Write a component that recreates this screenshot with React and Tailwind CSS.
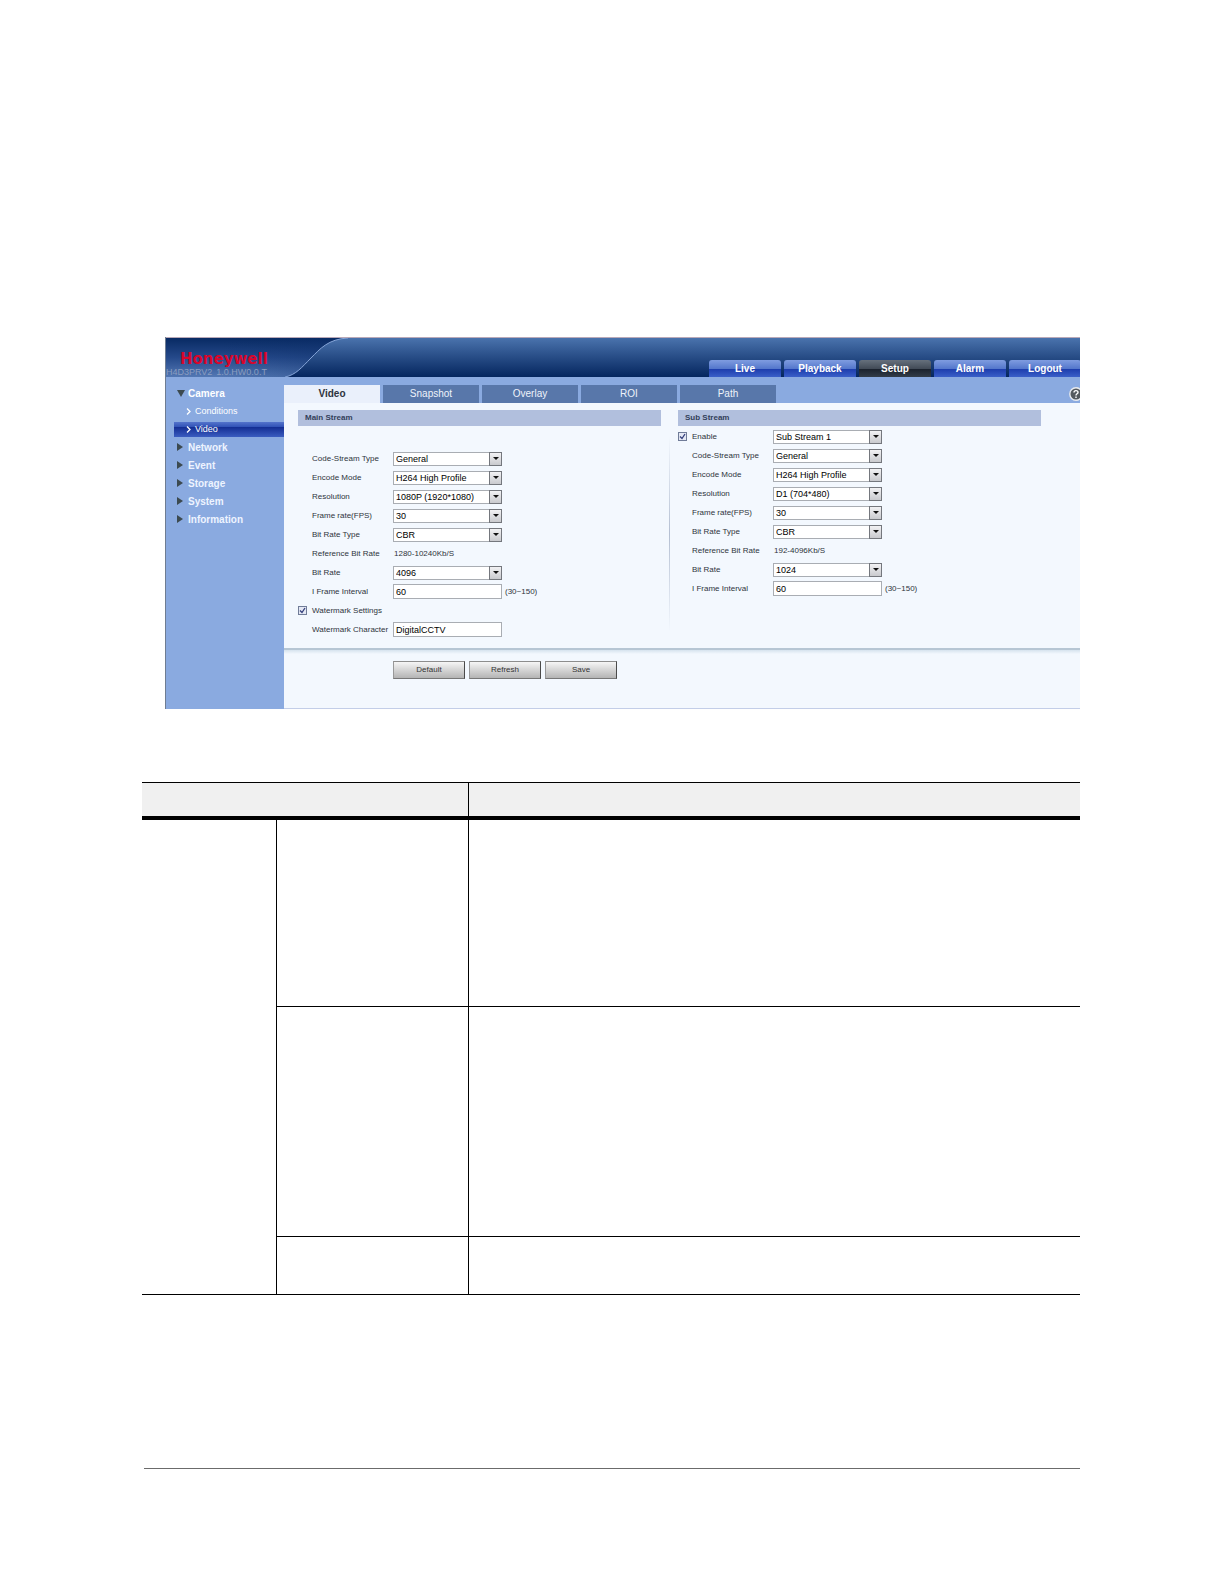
import { useState } from 'react';

const NAV = ['Live', 'Playback', 'Setup', 'Alarm', 'Logout'];
const TABS = ['Video', 'Snapshot', 'Overlay', 'ROI', 'Path'];
const SECTIONS = ['Network', 'Event', 'Storage', 'System', 'Information'];

function Header() {
  return (
    <header className="flex h-10 items-end justify-between overflow-hidden border-t border-[#b9a9b8] bg-linear-to-b from-[#4a73ad] to-[#05265f]">
      <div className="relative h-full w-[182px]">
        <svg className="absolute inset-0 h-full w-full" viewBox="0 0 182 39" preserveAspectRatio="none" aria-hidden="true">
          <defs>
            <linearGradient id="brand" x1="0" y1="0" x2="0" y2="1">
              <stop offset="0" stopColor="#082a63" />
              <stop offset="0.5" stopColor="#25498a" />
              <stop offset="1" stopColor="#5378b4" />
            </linearGradient>
            <linearGradient id="shade" x1="0" y1="0" x2="1" y2="0">
              <stop offset="0.3" stopColor="#0b2d66" stopOpacity="0" />
              <stop offset="1" stopColor="#0b2d66" stopOpacity="0.4" />
            </linearGradient>
          </defs>
          <path d="M0 0H182C162 1 154 11 145 20C136 29 130 37 119 39H0Z" fill="url(#brand)" />
          <path d="M0 0H182C162 1 154 11 145 20C136 29 130 37 119 39H0Z" fill="url(#shade)" />
          <path d="M182 0C162 1 154 11 145 20C136 29 130 37 119 39" fill="none" stroke="#86a5d8" />
        </svg>
        <div className="relative flex h-full flex-col justify-end">
          <span className="pl-[14px] font-['DejaVu_Sans',sans-serif] text-[15px] leading-[16px] font-bold text-[#d8062c]">
            Honeywell
          </span>
          <span className="flex gap-1 text-[9px] leading-[10px] text-[#8b9dbf]">
            <span>H4D3PRV2</span>
            <span>1.0.HW0.0.T</span>
          </span>
        </div>
      </div>
      <nav className="-mr-px flex gap-[3px]">
        {NAV.map((item) => (
          <a
            key={item}
            href="#"
            className={`h-[17px] w-[72px] rounded-t-[3px] text-center text-[10px] leading-[17px] font-bold text-white ${
              item === 'Setup'
                ? 'bg-[linear-gradient(#66707c,#434c58_50%,#1a212c_52%,#323c48)]'
                : 'bg-[linear-gradient(#7f9ce0,#5578cc_50%,#1c3cac_52%,#3a5fc8)]'
            }`}
          >
            {item}
          </a>
        ))}
      </nav>
    </header>
  );
}

function Sidebar() {
  return (
    <aside className="w-[118px] shrink-0 bg-[#8aaae0] pt-[7px] pl-2">
      <a href="#" className="flex h-[18px] items-center gap-[3px] pl-[3px] text-[10px] font-bold text-white">
        <svg className="h-[7px] w-[8px]" viewBox="0 0 8 7" aria-hidden="true">
          <path d="M0 0H8L4 7Z" fill="#3c4a50" />
        </svg>
        Camera
      </a>
      {['Conditions', 'Video'].map((item) => (
        <a key={item} href="#" className="flex h-[18px] items-center">
          <span
            className={`flex h-[15px] flex-1 items-center gap-1 pl-3 text-[9px] leading-[15px] text-white ${
              item === 'Video' ? 'bg-[linear-gradient(#5474cc,#3455b8_30%,#152f94_36%,#3a5cc0)]' : ''
            }`}
          >
            <svg className="h-[7px] w-[5px]" viewBox="0 0 5 7" aria-hidden="true">
              <path d="M1 0.5L4 3.5L1 6.5" fill="none" stroke="#fff" strokeWidth="1.3" />
            </svg>
            {item}
          </span>
        </a>
      ))}
      {SECTIONS.map((item) => (
        <a key={item} href="#" className="flex h-[18px] items-center gap-[5px] pl-[3px] text-[10px] font-bold text-[#eef4ff]">
          <svg className="h-[8px] w-[6px]" viewBox="0 0 6 8" aria-hidden="true">
            <path d="M0 0L6 4L0 8Z" fill="#3c4a50" />
          </svg>
          {item}
        </a>
      ))}
    </aside>
  );
}

function Check({ id }) {
  const [checked, setChecked] = useState(true);
  return (
    <span className="grid h-[9px] w-[9px] shrink-0">
      <input
        id={id}
        type="checkbox"
        checked={checked}
        onChange={() => setChecked(!checked)}
        className="col-start-1 row-start-1 h-[9px] w-[9px] appearance-none border border-[#707c98] bg-[#e4e8f4]"
      />
      {checked && (
        <svg className="pointer-events-none col-start-1 row-start-1 h-[9px] w-[9px]" viewBox="0 0 9 9" aria-hidden="true">
          <path d="M2 4.5L4 6.5L7 2" fill="none" stroke="#35407c" strokeWidth="1.3" />
        </svg>
      )}
    </span>
  );
}

function Select({ id, value, label }) {
  return (
    <span className="relative flex w-[109px]">
      <select
        id={id}
        aria-label={label}
        className="h-[14px] w-full appearance-none border border-[#a9adb3] bg-white pl-[2px] text-[9px] leading-[12px] text-black"
      >
        <option>{value}</option>
      </select>
      <span className="pointer-events-none absolute inset-y-0 right-0 flex w-[13px] items-center justify-center border border-[#74777d] bg-linear-to-b from-[#f2f2f4] to-[#c9cace]">
        <svg className="h-[3px] w-[6px]" viewBox="0 0 6 3" aria-hidden="true">
          <path d="M0 0H6L3 3Z" fill="#111" />
        </svg>
      </span>
    </span>
  );
}

function Row({ id, label, type, value, hint }) {
  return (
    <div className="flex h-[19px] items-center">
      <span className="flex w-[14px] shrink-0">{type === 'check' || type === 'checkSelect' ? <Check id={id} /> : null}</span>
      <label htmlFor={id} className="w-[81px] shrink-0 whitespace-nowrap">
        {label}
      </label>
      {type === 'select' && <Select id={id} value={value} />}
      {type === 'checkSelect' && <Select id={`${id}-stream`} label="Sub stream" value={value} />}
      {type === 'input' && (
        <input
          id={id}
          type="text"
          defaultValue={value}
          className="h-[15px] w-[109px] border border-[#a9adb3] bg-white pl-[2px] text-[9px] leading-[13px] text-black"
        />
      )}
      {type === 'text' && <output id={id} className="pl-px">{value}</output>}
      {hint && <span className="pl-[3px]">{hint}</span>}
    </div>
  );
}

const mainRows = [
  ['Code-Stream Type', 'select', 'General'],
  ['Encode Mode', 'select', 'H264 High Profile'],
  ['Resolution', 'select', '1080P (1920*1080)'],
  ['Frame rate(FPS)', 'select', '30'],
  ['Bit Rate Type', 'select', 'CBR'],
  ['Reference Bit Rate', 'text', '1280-10240Kb/S'],
  ['Bit Rate', 'select', '4096'],
  ['I Frame Interval', 'input', '60', '(30~150)'],
  ['Watermark Settings', 'check'],
  ['Watermark Character', 'input', 'DigitalCCTV'],
];

const subRows = [
  ['Enable', 'checkSelect', 'Sub Stream 1'],
  ['Code-Stream Type', 'select', 'General'],
  ['Encode Mode', 'select', 'H264 High Profile'],
  ['Resolution', 'select', 'D1 (704*480)'],
  ['Frame rate(FPS)', 'select', '30'],
  ['Bit Rate Type', 'select', 'CBR'],
  ['Reference Bit Rate', 'text', '192-4096Kb/S'],
  ['Bit Rate', 'select', '1024'],
  ['I Frame Interval', 'input', '60', '(30~150)'],
];

function Stream({ title, name, rows, className }) {
  return (
    <section className="min-w-0 flex-1">
      <h2 className="h-4 bg-[#b1bfdd] pl-[7px] leading-4 font-bold text-[#33405a]">{title}</h2>
      <div className={className}>
        {rows.map(([label, type, value, hint], i) => (
          <Row key={label} id={`${name}-${i}`} label={label} type={type} value={value} hint={hint} />
        ))}
      </div>
    </section>
  );
}

function CameraSetup() {
  return (
    <div className="overflow-hidden border-l border-[#6f7d92] font-['Liberation_Sans',sans-serif] text-[8px] text-[#2e343c]">
      <Header />
      <div className="flex">
        <Sidebar />
        <main className="min-w-0 flex-1 bg-[#f3f8fe]">
          <div className="flex items-end justify-between bg-[#8aaae0] pt-2">
            <nav className="flex gap-[3px]">
              {TABS.map((tab) => (
                <a
                  key={tab}
                  href="#"
                  className={`h-[18px] w-[96px] text-center text-[10px] leading-[18px] ${
                    tab === 'Video' ? 'bg-[#eaf0fb] font-bold text-[#2d3440]' : 'bg-[#5877aa] text-[#eef3fb]'
                  }`}
                >
                  {tab}
                </a>
              ))}
            </nav>
            <button type="button" aria-label="Help" className="-mr-[3px] h-[18px]">
              <svg className="h-[14px] w-[14px]" viewBox="0 0 14 14" aria-hidden="true">
                <circle cx="7" cy="7" r="6.2" fill="#555a5f" stroke="#e8ebef" strokeWidth="1.4" />
                <path d="M5 5.6C5 3 9 3 9 5.4C9 6.8 7 6.8 7 8.4M7 9.6V11" fill="none" stroke="#fff" strokeWidth="1.4" />
              </svg>
            </button>
          </div>
          <div className="flex pt-[7px] pr-[39px] pb-[9px] pl-[14px]">
            <Stream title="Main Stream" name="main" rows={mainRows} className="pt-[23px]" />
            <div className="mx-2 mt-[26px] mb-[7px] w-px bg-linear-to-b from-transparent via-[#b4bfd2] to-transparent" />
            <Stream title="Sub Stream" name="sub" rows={subRows} className="pt-px" />
          </div>
          <div className="h-[2px] bg-[#b6c6d4]" />
          <div className="h-1 bg-linear-to-b from-[#d6e3ee] to-[#f3f8fe]" />
          <div className="flex gap-1 border-b border-[#c3cee8] pt-[7px] pb-[29px] pl-[109px]">
            {['Default', 'Refresh', 'Save'].map((item) => (
              <button
                key={item}
                type="button"
                className="h-[18px] w-[72px] border border-t-[#8d8d8d] border-r-[#4a4a4a] border-b-[#777] border-l-[#999] bg-linear-to-b from-[#f6f6f6] to-[#b4b4b4] leading-[16px] text-[#333]"
              >
                {item}
              </button>
            ))}
          </div>
        </main>
      </div>
    </div>
  );
}

function SettingsTable() {
  return (
    <table className="w-full table-fixed border-collapse border-y border-black">
      <colgroup>
        <col className="w-[134px]" />
        <col className="w-[192px]" />
        <col />
      </colgroup>
      <thead>
        <tr className="h-[35px] border-b-4 border-black bg-[#f0f0f0]">
          <th colSpan={2} className="border-r border-black" />
          <th />
        </tr>
      </thead>
      <tbody>
        <tr className="h-[189px]">
          <td rowSpan={3} className="border-r border-black" />
          <td className="border-r border-b border-black" />
          <td className="border-b border-black" />
        </tr>
        <tr className="h-[230px]">
          <td className="border-r border-b border-black" />
          <td className="border-b border-black" />
        </tr>
        <tr className="h-[58px]">
          <td className="border-r border-black" />
          <td />
        </tr>
      </tbody>
    </table>
  );
}

export default function App() {
  return (
    <div className="min-h-screen bg-white pt-[337px] pr-36 pb-[115px] pl-[142px]">
      <div className="pl-[23px]">
        <CameraSetup />
      </div>
      <div className="pt-[73px]">
        <SettingsTable />
      </div>
      <hr className="mt-[173px] ml-[2px] border-[#6b6b6b]" />
    </div>
  );
}
